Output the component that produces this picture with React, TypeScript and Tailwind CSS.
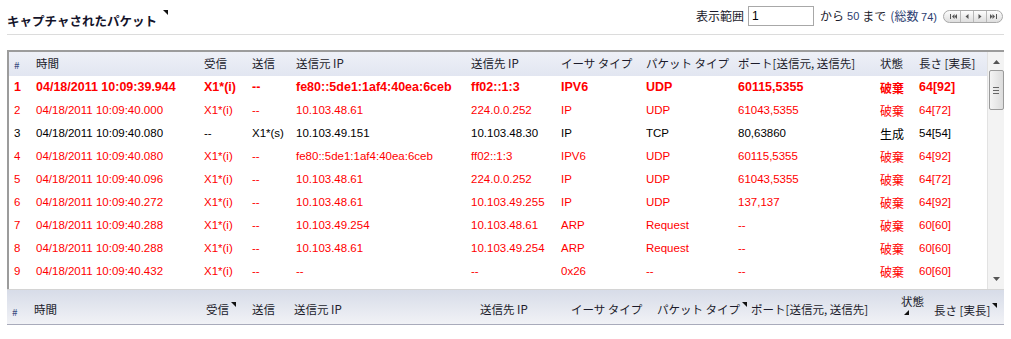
import React from "react";

const FONT = "font-['Liberation_Sans','Noto_Sans_CJK_JP',sans-serif]";
const JP = "font-['Noto_Sans_CJK_JP','Liberation_Sans',sans-serif]";

type Row = {
  no: number;
  time: string;
  rx: string;
  tx: string;
  src: string;
  dst: string;
  eth: string;
  pkt: string;
  port: string;
  state: string;
  len: string;
  tone: "red" | "black";
  bold?: boolean;
};

const rows: Row[] = [
  { no: 1, time: "04/18/2011 10:09:39.944", rx: "X1*(i)", tx: "--", src: "fe80::5de1:1af4:40ea:6ceb", dst: "ff02::1:3", eth: "IPV6", pkt: "UDP", port: "60115,5355", state: "破棄", len: "64[92]", tone: "red", bold: true },
  { no: 2, time: "04/18/2011 10:09:40.000", rx: "X1*(i)", tx: "--", src: "10.103.48.61", dst: "224.0.0.252", eth: "IP", pkt: "UDP", port: "61043,5355", state: "破棄", len: "64[72]", tone: "red" },
  { no: 3, time: "04/18/2011 10:09:40.080", rx: "--", tx: "X1*(s)", src: "10.103.49.151", dst: "10.103.48.30", eth: "IP", pkt: "TCP", port: "80,63860", state: "生成", len: "54[54]", tone: "black" },
  { no: 4, time: "04/18/2011 10:09:40.080", rx: "X1*(i)", tx: "--", src: "fe80::5de1:1af4:40ea:6ceb", dst: "ff02::1:3", eth: "IPV6", pkt: "UDP", port: "60115,5355", state: "破棄", len: "64[92]", tone: "red" },
  { no: 5, time: "04/18/2011 10:09:40.096", rx: "X1*(i)", tx: "--", src: "10.103.48.61", dst: "224.0.0.252", eth: "IP", pkt: "UDP", port: "61043,5355", state: "破棄", len: "64[72]", tone: "red" },
  { no: 6, time: "04/18/2011 10:09:40.272", rx: "X1*(i)", tx: "--", src: "10.103.48.61", dst: "10.103.49.255", eth: "IP", pkt: "UDP", port: "137,137", state: "破棄", len: "64[92]", tone: "red" },
  { no: 7, time: "04/18/2011 10:09:40.288", rx: "X1*(i)", tx: "--", src: "10.103.49.254", dst: "10.103.48.61", eth: "ARP", pkt: "Request", port: "--", state: "破棄", len: "60[60]", tone: "red" },
  { no: 8, time: "04/18/2011 10:09:40.288", rx: "X1*(i)", tx: "--", src: "10.103.48.61", dst: "10.103.49.254", eth: "ARP", pkt: "Request", port: "--", state: "破棄", len: "60[60]", tone: "red" },
  { no: 9, time: "04/18/2011 10:09:40.432", rx: "X1*(i)", tx: "--", src: "--", dst: "--", eth: "0x26", pkt: "--", port: "--", state: "破棄", len: "60[60]", tone: "red" },
];

const COLS = "grid grid-cols-[22px_168px_48px_44px_175px_90px_85px_92px_142px_39px_1fr]";
const FOOT_COLS = "grid grid-cols-[22px_172px_46px_42px_186px_91px_86px_94px_150px_30px_1fr]";

function Corner({ className = "" }: { className?: string }) {
  return (
    <svg width="5" height="5" viewBox="0 0 5 5" className={className}>
      <polygon points="0,0 5,0 5,5" fill="#111" />
    </svg>
  );
}

function Pager() {
  const icons = [
    <svg key="a" width="7" height="5" viewBox="0 0 7 5"><rect x="0" y="0" width="1" height="5" fill="#555" /><polygon points="2,2.5 4.5,0 4.5,5" fill="#555" /><polygon points="4.5,2.5 7,0 7,5" fill="#555" /></svg>,
    <svg key="b" width="4" height="5" viewBox="0 0 4 5"><polygon points="0.5,2.5 3.5,0 3.5,5" fill="#555" /></svg>,
    <svg key="c" width="4" height="5" viewBox="0 0 4 5"><polygon points="3.5,2.5 0.5,0 0.5,5" fill="#555" /></svg>,
    <svg key="d" width="7" height="5" viewBox="0 0 7 5"><polygon points="2.5,2.5 0,0 0,5" fill="#555" /><polygon points="5,2.5 2.5,0 2.5,5" fill="#555" /><rect x="6" y="0" width="1" height="5" fill="#555" /></svg>,
  ];
  return (
    <div className="flex h-[13px] items-stretch rounded-full border border-[#a9a9a9] bg-gradient-to-b from-[#fdfdfd] to-[#dedede] px-[3px]">
      {icons.map((ic, i) => (
        <div
          key={i}
          className={`flex w-[13px] items-center justify-center ${i > 0 ? "border-l border-[#b8b8b8]" : ""}`}
        >
          {ic}
        </div>
      ))}
    </div>
  );
}

function Scrollbar() {
  return (
    <div className="flex w-[17px] shrink-0 flex-col items-center border-l border-[#e2e2e2] bg-[#f3f3f3]">
      <svg width="7" height="4" viewBox="0 0 7 4" className="mt-[8px]">
        <polygon points="3.5,0 7,4 0,4" fill="#555" />
      </svg>
      <div className="mt-[6px] flex h-[40px] w-[15px] flex-col items-center justify-center gap-[2px] rounded-[2px] border border-[#9a9a9a] bg-gradient-to-r from-[#f4f4f4] to-[#dcdcdc]">
        <div className="h-px w-[6px] bg-[#666]" />
        <div className="h-px w-[6px] bg-[#666]" />
        <div className="h-px w-[6px] bg-[#666]" />
      </div>
      <div className="flex-1" />
      <svg width="7" height="4" viewBox="0 0 7 4" className="mb-[8px]">
        <polygon points="0,0 7,0 3.5,4" fill="#555" />
      </svg>
    </div>
  );
}

function DataRow({ r }: { r: Row }) {
  const color = r.tone === "red" ? "text-[#ff0000]" : "text-[#000]";
  const weight = r.bold ? "font-bold text-[12.5px]" : "text-[11.5px]";
  return (
    <div className={`${COLS} h-[23px] items-center whitespace-nowrap pl-[5px] ${color} ${weight}`}>
      <span>{r.no}</span>
      <span>{r.time}</span>
      <span>{r.rx}</span>
      <span>{r.tx}</span>
      <span>{r.src}</span>
      <span>{r.dst}</span>
      <span>{r.eth}</span>
      <span>{r.pkt}</span>
      <span>{r.port}</span>
      <span className={`${JP} text-[12px]`}>{r.state}</span>
      <span>{r.len}</span>
    </div>
  );
}

export default function App() {
  const head = ["#", "時間", "受信", "送信", "送信元 IP", "送信先 IP", "イーサ タイプ", "パケット タイプ", "ポート[送信元, 送信先]", "状態", "長さ [実長]"];
  return (
    <div className={`${FONT} h-[339px] w-[1011px] overflow-hidden bg-white text-[#1b1b2b]`}>
      {/* title bar */}
      <div className="mx-[7px] flex h-[35px] items-center justify-between border-b border-[#dcdcdc] pb-[2px]">
        <div className="flex items-start gap-[6px] pt-[10px]">
          <span className={`${JP} text-[12.5px] font-bold leading-none text-[#14142a]`}>キャプチャされたパケット</span>
          <Corner className="-mt-[5px]" />
        </div>
        <div className="flex items-center pr-[1px] text-[12px]">
          <span className={JP}>表示範囲</span>
          <input
            readOnly
            value="1"
            className="ml-[4px] h-[20px] w-[66px] border border-[#a8a8a8] px-[3px] text-[12px] text-black outline-none"
          />
          <span className={`${JP} ml-[6px]`}>から</span>
          <span className="ml-[3px] text-[11px] text-[#2c3d70]">50</span>
          <span className={`${JP} ml-[3px]`}>まで</span>
          <span className={`${JP} ml-[4px] text-[#2c3d70]`}>(総数 <span className={`${FONT} text-[11px]`}>74)</span></span>
          <div className="ml-[6px]">
            <Pager />
          </div>
        </div>
      </div>

      {/* table */}
      <div className="mx-[7px] mt-[15px] flex h-[239px] border-t-2 border-l-2 border-[#9c9c9c]">
        <div className="flex min-w-0 flex-1 flex-col">
          <div className={`${COLS} ${JP} h-[24px] shrink-0 items-center whitespace-nowrap bg-gradient-to-b from-[#eef0f7] to-[#e2e6f1] pl-[5px] text-[11.5px] text-[#1b1b2b]`}>
            {head.map((h, i) => (
              <span key={h} className={i === 0 ? "text-[10px] text-[#3a4a80]" : ""}>
                {h}
              </span>
            ))}
          </div>
          <div className="flex-1 overflow-hidden">
            {rows.map((r) => (
              <DataRow key={r.no} r={r} />
            ))}
          </div>
        </div>
        <Scrollbar />
      </div>

      {/* footer header */}
      <div className={`${FOOT_COLS} ${JP} mx-[7px] h-[36px] items-center whitespace-nowrap border-t border-[#d4d4d4] border-b border-b-[#a9abbb] bg-gradient-to-b from-[#d7dce8] to-[#f1f2f6] pl-[5px] pt-[4px] text-[11.5px] text-[#1b1b2b]`}>
        <span className="pt-[4px] text-[10px] text-[#3a4a80]">#</span>
        <span className="pt-[2px]">時間</span>
        <span className="flex items-start gap-[2px] pt-[2px]">受信<Corner className="mt-[1px]" /></span>
        <span className="pt-[2px]">送信</span>
        <span className="pt-[2px]">送信元 IP</span>
        <span className="pt-[2px]">送信先 IP</span>
        <span className="flex items-start gap-[2px] pt-[2px]">イーサ タイプ</span>
        <span className="flex items-start gap-[2px] pt-[2px]">パケット タイプ<Corner className="mt-[1px]" /></span>
        <span className="pt-[2px]">ポート[送信元, 送信先]</span>
        <span className="flex flex-col items-start self-start leading-[14px]">
          状態
          <Corner className="ml-[3px] mt-[2px] rotate-90" />
        </span>
        <span className="flex items-start gap-[2px] pt-[4px] pl-[3px]">長さ [実長]<Corner className="mt-[1px]" /></span>
      </div>
    </div>
  );
}
